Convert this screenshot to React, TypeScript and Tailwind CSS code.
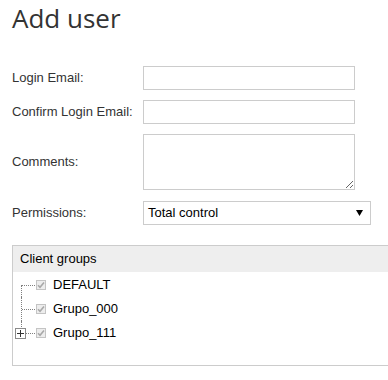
import React from "react";

function Check() {
  return (
    <span className="w-[10px] h-[10px] border border-[#c4c4c4] bg-[#ededed] flex items-center justify-center shrink-0">
      <svg width="8" height="8" viewBox="0 0 8 8">
        <path d="M1 4.2 L3 6.2 L7 1.5" stroke="#a8a8a8" strokeWidth="1.6" fill="none" />
      </svg>
    </span>
  );
}

function TreeItem({ label, first, last }: { label: string; first?: boolean; last?: boolean }) {
  return (
    <div className="relative h-[24px] flex items-center pl-[23px]">
      <span
        className={
          "absolute left-[8px] border-l border-dotted border-[#808080] " +
          (first ? "top-[12px] bottom-0" : last ? "top-0 h-[12px]" : "top-0 bottom-0")
        }
      />
      <span className="absolute left-[9px] w-[13px] top-[12px] border-t border-dotted border-[#808080]" />
      {last && (
        <span className="absolute left-[2px] top-[7px] w-[11px] h-[11px] border border-[#8a8a8a] bg-white flex items-center justify-center">
          <svg width="7" height="7" viewBox="0 0 7 7">
            <path d="M0 3.5 H7 M3.5 0 V7" stroke="#333" strokeWidth="1" />
          </svg>
        </span>
      )}
      <Check />
      <span className="ml-[7px] text-[13px] text-black">{label}</span>
    </div>
  );
}

export default function App() {
  return (
    <div className="w-[388px] h-[380px] bg-white overflow-hidden pl-[12px] text-[#333]" style={{ fontFamily: '"Liberation Sans", Arial, sans-serif' }}>
      <h1 className="text-[26px] leading-[36px] pt-[0px] text-[#333] font-normal" style={{ fontFamily: '"Open Sans", sans-serif' }}>
        Add user
      </h1>
      <div className="mt-[30px] flex flex-col">
        <div className="flex items-center h-[24px]">
          <label className="w-[131px] text-[13px]">Login Email:</label>
          <input className="w-[212px] h-[24px] border border-[#ccc] outline-none" />
        </div>
        <div className="flex items-center h-[24px] mt-[10px]">
          <label className="w-[131px] text-[13px]">Confirm Login Email:</label>
          <input className="w-[212px] h-[24px] border border-[#ccc] outline-none" />
        </div>
        <div className="flex items-center h-[56px] mt-[10px]">
          <label className="w-[131px] text-[13px]">Comments:</label>
          <textarea className="w-[212px] h-[56px] border border-[#ccc] outline-none resize" />
        </div>
        <div className="flex items-center h-[24px] mt-[11px]">
          <label className="w-[131px] text-[13px]">Permissions:</label>
          <div className="w-[228px] h-[24px] border border-[#ccc] flex items-center justify-between pl-[4px] pr-[7px]">
            <span className="text-[13px] text-black">Total control</span>
            <svg width="7" height="6" viewBox="0 0 7 6">
              <path d="M0 0 H7 L3.5 6 Z" fill="#000" />
            </svg>
          </div>
        </div>
      </div>
      <div className="mt-[20px] w-[400px] h-[121px] border border-[#ccc]">
        <div className="h-[26px] bg-[#eee] flex items-center pl-[7px] text-[13px] text-black">Client groups</div>
        <div className="pt-[1px]">
          <TreeItem label="DEFAULT" first />
          <TreeItem label="Grupo_000" />
          <TreeItem label="Grupo_111" last />
        </div>
      </div>
    </div>
  );
}
